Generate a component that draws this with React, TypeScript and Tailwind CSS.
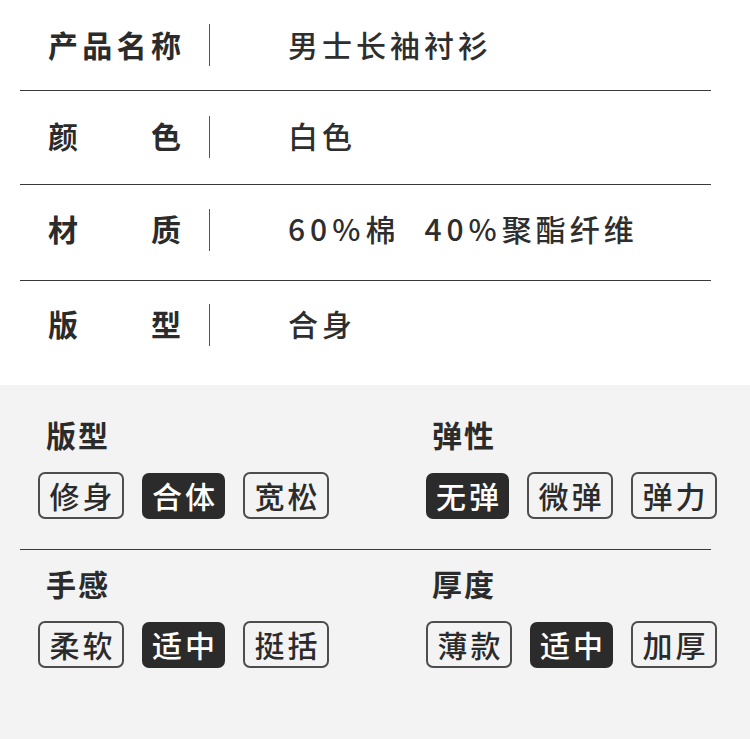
import React from "react";

const font = { fontFamily: '"Noto Sans CJK SC", "Noto Sans", sans-serif' };

interface Spec {
  label: string[];
  value: React.ReactNode;
  h: string;
}

const specs: Spec[] = [
  { label: ["产", "品", "名", "称"], value: "男士长袖衬衫", h: "h-[90px]" },
  { label: ["颜", "色"], value: "白色", h: "h-[93px] pb-[2px]" },
  {
    label: ["材", "质"],
    value: (
      <>
        <span className="tracking-[5px]">60%</span>
        <span>棉</span>
        <span className="ml-[25px] tracking-[5px]">40%</span>
        <span>聚酯纤维</span>
      </>
    ),
    h: "h-[95px] pb-[6px]",
  },
  { label: ["版", "型"], value: "合身", h: "h-[89px] pb-[2px]" },
];

interface Group {
  title: string;
  options: string[];
  active: number;
}

const rows: Group[][] = [
  [
    { title: "版型", options: ["修身", "合体", "宽松"], active: 1 },
    { title: "弹性", options: ["无弹", "微弹", "弹力"], active: 0 },
  ],
  [
    { title: "手感", options: ["柔软", "适中", "挺括"], active: 1 },
    { title: "厚度", options: ["薄款", "适中", "加厚"], active: 1 },
  ],
];

const Tag = ({ text, active }: { text: string; active: boolean }) => (
  <div
    className={
      active
        ? "w-[83px] h-[46px] rounded-[7px] bg-[#2b2b2b] text-white flex items-center justify-center text-[30px] font-medium tracking-[3px] pl-[3px] pb-[2px] leading-none"
        : "w-[86px] h-[47px] rounded-[7px] border-2 border-[#4d4d4d] text-[#2b2b2b] flex items-center justify-center text-[30px] font-medium tracking-[3px] pl-[3px] pb-[2px] leading-none"
    }
  >
    {text}
  </div>
);

const GroupBlock = ({ g, right }: { g: Group; right?: boolean }) => (
  <div>
    <h3
      className={
        right
          ? "ml-[6px] text-[30px] font-bold leading-[32px] tracking-[2px] text-[#2b2b2b]"
          : "ml-[8px] text-[30px] font-bold leading-[32px] tracking-[2px] text-[#2b2b2b]"
      }
    >
      {g.title}
    </h3>
    <div className="mt-[22px] flex items-center gap-[18px]">
      {g.options.map((o, i) => (
        <Tag key={o + i} text={o} active={i === g.active} />
      ))}
    </div>
  </div>
);

export default function App() {
  return (
    <div className="w-[750px] h-[739px] bg-white overflow-hidden" style={font}>
      {/* spec table */}
      <div className="px-[20px] w-[731px]">
        {specs.map((s, i) => (
          <div key={i} className={i < specs.length - 1 ? "border-b border-[#3a3a3a]" : ""}>
            <div className={`${s.h} flex items-center`}>
              <div className="ml-[28px] w-[133px] flex justify-between text-[30px] font-bold text-[#2b2b2b] leading-none pb-[3px]">
                {s.label.map((c) => (
                  <span key={c}>{c}</span>
                ))}
              </div>
              <div className="ml-[28px] w-px h-[42px] bg-[#555]" />
              <div className="ml-[78px] text-[30px] font-medium tracking-[4px] text-[#2e2e2e] leading-none pb-[3px]">
                {s.value}
              </div>
            </div>
          </div>
        ))}
      </div>
      <div className="h-[15px]" />

      {/* attributes */}
      <div className="bg-[#f3f3f3] h-[354px] pt-[33px]">
        <div className="grid grid-cols-[388px_1fr] pl-[38px]">
          <GroupBlock g={rows[0][0]} />
          <GroupBlock g={rows[0][1]} right />
        </div>
        <div className="mx-[20px] w-[691px] h-px bg-[#3a3a3a] mt-[30px]" />
        <div className="grid grid-cols-[388px_1fr] pl-[38px] mt-[17px]">
          <GroupBlock g={rows[1][0]} />
          <GroupBlock g={rows[1][1]} right />
        </div>
      </div>
    </div>
  );
}
